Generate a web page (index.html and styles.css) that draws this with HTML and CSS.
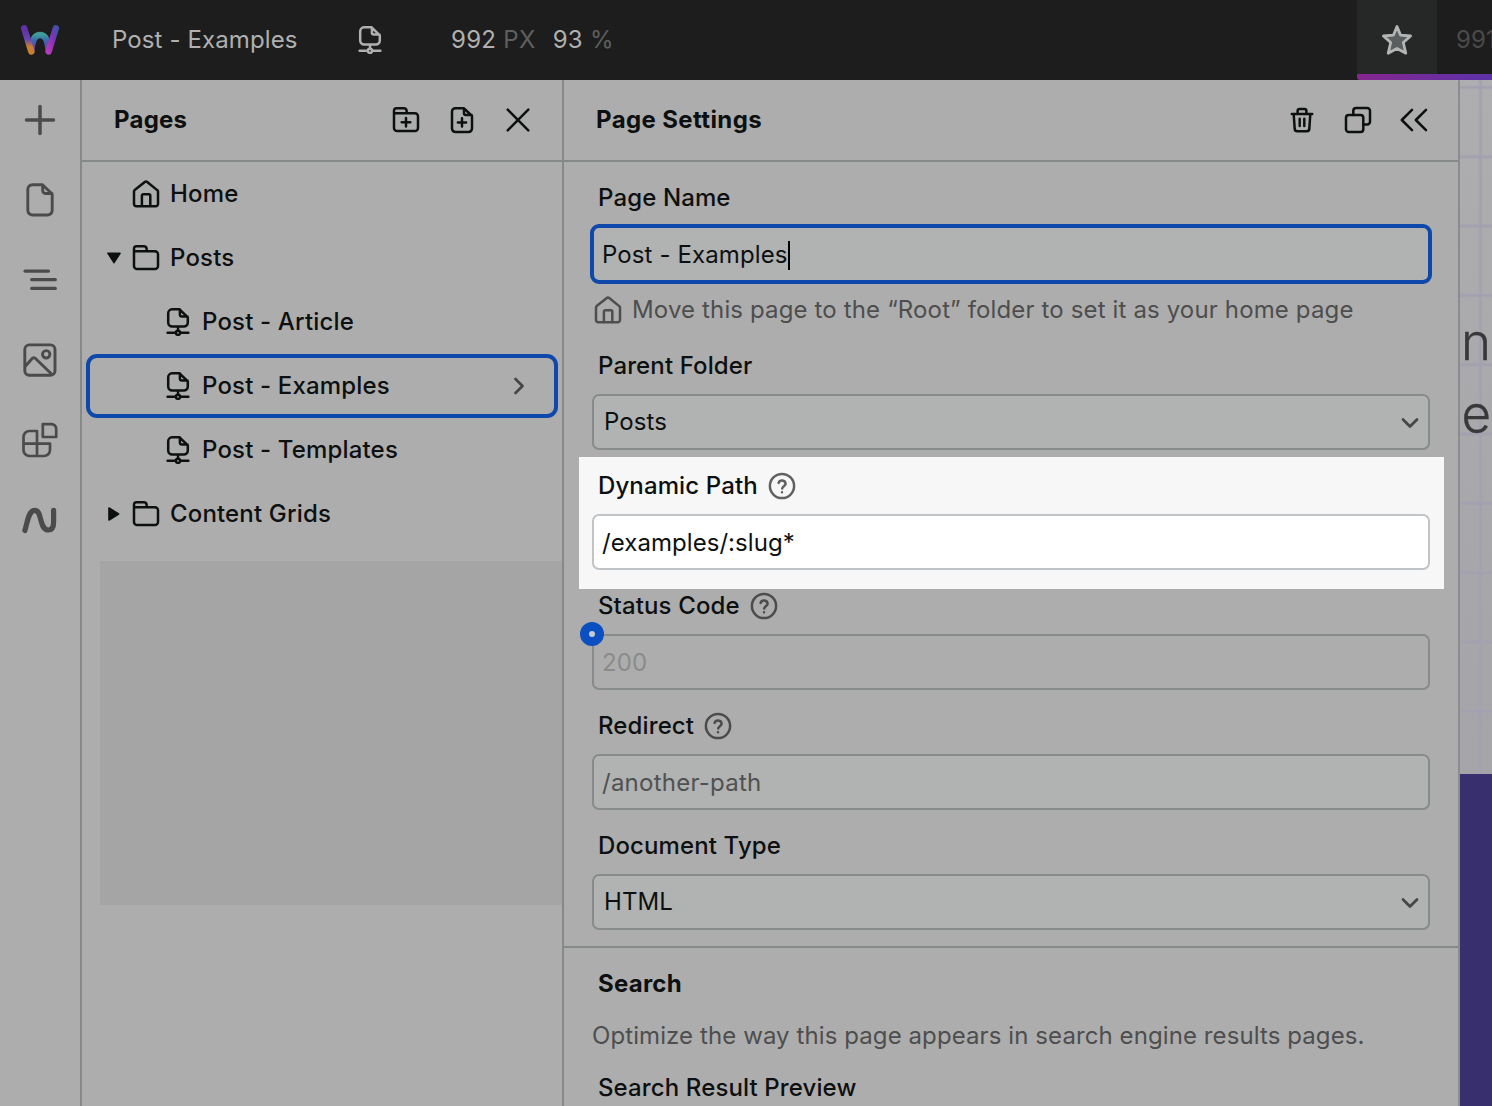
FILE: index.html
```html
<!DOCTYPE html>
<html lang="en">
<head>
<meta charset="utf-8">
<title>Page Settings</title>
<link rel="stylesheet" href="styles.css">
</head>
<body>
<svg class="defs" width="0" height="0">
  <defs>
    <symbol id="dynamic-page" viewBox="0 0 28 28">
      <path d="M15.6 1.3H8A4 4 0 0 0 4.2 5.3V14.6A4 4 0 0 0 8.2 18.6H19.8A4 4 0 0 0 23.8 14.6V9.3ZM15.9 1.6V6.5A2 2 0 0 0 17.9 8.5H23.4M14 19V22.4M3.6 24.8H11.8M16.2 24.8H24.4"/>
      <circle cx="14" cy="24.8" r="2.1"/>
    </symbol>
    <symbol id="home" viewBox="0 0 28 28">
      <path d="M2 11.6A2 2 0 0 1 2.7 10.1L12.8 2A1.9 1.9 0 0 1 15.2 2L25.2 10.1A2 2 0 0 1 26 11.6V24A2.3 2.3 0 0 1 23.7 26.3H4.3A2.3 2.3 0 0 1 2 24ZM9.9 26V15.6A1.4 1.4 0 0 1 11.3 14.2H16.9A1.4 1.4 0 0 1 18.3 15.6V26"/>
    </symbol>
    <symbol id="folder" viewBox="0 0 28 28">
      <path d="M2 7.4V4.8A2.6 2.6 0 0 1 4.6 2.2H11.8A2.8 2.8 0 0 1 14.6 4.8V5.2A2.2 2.2 0 0 0 16.8 7.3H22.9A3.1 3.1 0 0 1 26 10.4V22A3.1 3.1 0 0 1 22.9 25.1H5.1A3.1 3.1 0 0 1 2 22V7.3H16.8"/>
    </symbol>
    <symbol id="help" viewBox="0 0 28 28">
      <circle cx="14" cy="14" r="12.1"/>
      <path d="M10.6 10.9A3.6 3.6 0 0 1 17.6 11.8C17.6 14 14.2 14.4 14.2 16.5M14 20.2V20.3"/>
    </symbol>
    <symbol id="chevron" viewBox="0 0 20 20"><path d="M3 6.5L10 13.5L17 6.5"/></symbol>
  </defs>
</svg>

<header class="topbar">
  <svg class="logo" viewBox="0 0 40 32">
    <defs>
      <linearGradient id="lg-left" x1="0" y1="0" x2="0" y2="1"><stop offset=".1" stop-color="#6232a8"/><stop offset=".5" stop-color="#6a48ac"/><stop offset=".8" stop-color="#c8802f"/></linearGradient>
      <linearGradient id="lg-right" x1="1" y1="0" x2="0" y2="1"><stop offset="0" stop-color="#4250ac"/><stop offset=".45" stop-color="#8630b4"/><stop offset="1" stop-color="#b03cb8"/></linearGradient>
      <linearGradient id="lg-mid" x1="0" y1="0" x2="0" y2="1"><stop offset="0" stop-color="#3f9c98"/><stop offset=".35" stop-color="#3b68b4"/><stop offset=".9" stop-color="#7040a8"/></linearGradient>
    </defs>
    <path d="M11.5 26C12 18 14 11 20 11S28 18 28.5 26" stroke="url(#lg-mid)"/>
    <path d="M4.2 8L7 17Q9 24 11.3 31" transform="translate(0 -3.6)" stroke="url(#lg-left)"/>
    <path d="M35.8 8L33 17Q31 24 28.7 31" transform="translate(0 -3.6)" stroke="url(#lg-right)"/>
  </svg>
  <span class="page-title">Post - Examples</span>
  <svg class="icon page-kind"><use href="#dynamic-page"/></svg>
  <span class="measure">992 <i>PX</i></span>
  <span class="measure">93 <i>%</i></span>
  <div class="breakpoints">
    <div class="star-tab"><svg width="36" height="36" viewBox="0 0 36 36"><path d="M18 4.5L21.6 13.2L31.6 14L24.3 20.5L26.8 31.2L18 26.6L9.2 31.2L11.7 20.5L4.4 14L14.4 13.2Z"/></svg></div>
    <span>991</span>
  </div>
</header>

<div class="workspace">
  <nav class="rail">
    <svg viewBox="0 0 40 40"><path d="M20 6.5V33.5M6.5 20H33.5" stroke-width="3.5"/></svg>
    <svg viewBox="0 0 40 40"><path d="M22.5 4.7H12.5A4.7 4.7 0 0 0 7.8 9.4V30.3A4.7 4.7 0 0 0 12.5 35H27.5A4.7 4.7 0 0 0 32.2 30.3V14ZM22.7 5V10.5A3 3 0 0 0 25.7 13.5H32"/></svg>
    <svg viewBox="0 0 40 40"><path d="M5 11.1H28.5M11.7 19.7H35.3M11.7 28.4H35.3" stroke-width="3.2"/></svg>
    <svg viewBox="0 0 40 40"><rect x="4.8" y="4.9" width="30.2" height="30.4" rx="4.5"/><circle cx="26.2" cy="14.3" r="3.7"/><path d="M5.3 26.3L12.4 18.3Q13.8 17 15.2 18.3L31.8 34.3"/></svg>
    <svg viewBox="0 0 40 40"><path d="M17 36V11H9.5A6 6 0 0 0 3.5 17V30A6 6 0 0 0 9.5 36H24A6 6 0 0 0 30 30V23.7H3.5M22.8 4.1H31.5A4.7 4.7 0 0 1 36.2 8.8V17H22.8Z" stroke-width="2.7"/></svg>
    <svg viewBox="0 0 40 40"><path d="M4.9 30.5C7.5 22 8.5 10.3 14.8 10.3C22.5 10.3 18.8 30 28.5 30C32.4 30 33.6 26.5 33.6 22V10.4" stroke-width="5.2"/></svg>
  </nav>

  <section class="pages">
    <div class="panel-head">
      <h2>Pages</h2>
      <svg class="icon" viewBox="0 0 28 28"><use href="#folder"/><path d="M14 12V20.6M9.7 16.3H18.3"/></svg>
      <svg class="icon" viewBox="0 0 28 28"><path d="M15.8 2.2H7.4A3.4 3.4 0 0 0 4 5.6V22.6A3.4 3.4 0 0 0 7.4 26H20.6A3.4 3.4 0 0 0 24 22.6V10ZM16 2.6V7A2 2 0 0 0 18 9H23.6M14 12.3V20.5M9.9 16.4H18.1"/></svg>
      <svg class="icon" viewBox="0 0 28 28"><path d="M3.7 3.7L24.3 24.3M24.3 3.7L3.7 24.3"/></svg>
    </div>
    <div class="row root"><svg class="icon"><use href="#home"/></svg><span>Home</span></div>
    <div class="row folder-row"><svg class="tri" viewBox="0 0 16 16"><path d="M2 3.2H14L8 12.6Z"/></svg><svg class="icon"><use href="#folder"/></svg><span>Posts</span></div>
    <div class="row child"><svg class="icon"><use href="#dynamic-page"/></svg><span>Post - Article</span></div>
    <div class="row child selected"><svg class="icon"><use href="#dynamic-page"/></svg><span>Post - Examples</span><svg class="chev right"><use href="#chevron"/></svg></div>
    <div class="row child"><svg class="icon"><use href="#dynamic-page"/></svg><span>Post - Templates</span></div>
    <div class="row folder-row"><svg class="tri" viewBox="0 0 16 16"><path d="M3 2V14L12.6 8Z"/></svg><svg class="icon"><use href="#folder"/></svg><span>Content Grids</span></div>
    <div class="placeholder"></div>
  </section>

  <section class="settings">
    <div class="panel-head">
      <h2>Page Settings</h2>
      <svg class="icon" viewBox="0 0 28 28"><path d="M3.8 8H24.2M5.7 8L6.7 23A2.5 2.5 0 0 0 9.2 25.2H18.8A2.5 2.5 0 0 0 21.3 23L22.3 8M9.6 7.6V5A2 2 0 0 1 11.6 3H16.4A2 2 0 0 1 18.4 5V7.6M11.7 12.8V20M16.3 12.8V20"/></svg>
      <svg class="icon" viewBox="0 0 28 28"><rect x="2" y="9" width="17.3" height="17" rx="2.8"/><path d="M9.3 9V4.8A2.8 2.8 0 0 1 12.1 2H23.2A2.8 2.8 0 0 1 26 4.8V15.7A2.8 2.8 0 0 1 23.2 18.5H19.3"/></svg>
      <svg class="icon" viewBox="0 0 28 28"><path d="M12 3.8L1.8 14L12 24.2M26 3.8L15.8 14L26 24.2"/></svg>
    </div>
    <div class="form">
      <div class="field">
        <label>Page Name</label>
        <div class="input focused">Post - Examples<span class="caret"></span></div>
        <p class="hint"><svg class="icon"><use href="#home"/></svg>Move this page to the “Root” folder to set it as your home page</p>
      </div>
      <div class="field">
        <label>Parent Folder</label>
        <div class="input select">Posts<svg class="chev"><use href="#chevron"/></svg></div>
      </div>
      <div class="field highlight">
        <label>Dynamic Path<svg class="icon"><use href="#help"/></svg></label>
        <div class="input">/examples/:slug*</div>
      </div>
      <div class="field">
        <label>Status Code<svg class="icon"><use href="#help"/></svg></label>
        <div class="input disabled">200<span class="marker"></span></div>
      </div>
      <div class="field">
        <label>Redirect<svg class="icon"><use href="#help"/></svg></label>
        <div class="input empty">/another-path</div>
      </div>
      <div class="field">
        <label>Document Type</label>
        <div class="input select">HTML<svg class="chev"><use href="#chevron"/></svg></div>
      </div>
    </div>
    <div class="search">
      <h3>Search</h3>
      <p>Optimize the way this page appears in search engine results pages.</p>
      <label>Search Result Preview</label>
    </div>
  </section>

  <main class="canvas">
    <div class="hero"><span>on</span><span>e</span></div>
    <div class="band"></div>
  </main>
</div>
</body>
</html>
```
FILE: styles.css
```css
* { box-sizing: border-box; }
body {
  margin: 0;
  width: 1492px;
  height: 1106px;
  overflow: hidden;
  display: flex;
  flex-direction: column;
  background: #adadad;
  color: #0d1010;
  font: 400 24px/32px Inter, "Liberation Sans", sans-serif;
  letter-spacing: 0.12px;
}
h2, h3, p { margin: 0; font-size: 24px; }
h2, h3 { font-weight: 700; letter-spacing: 0.24px; }
svg { flex: none; fill: none; stroke: currentColor; stroke-width: 2.5; stroke-linecap: round; stroke-linejoin: round; }
.defs { position: absolute; }
.icon { width: 28px; height: 28px; }

.topbar { flex: none; height: 80px; display: flex; align-items: center; background: #1d1d1d; color: #b0b0b0; padding-left: 20px; overflow: hidden; }
.logo { width: 40px; height: 32px; stroke-width: 6.4; }
.page-title { width: 244px; margin-left: 52px; }
.page-kind { margin-right: 67px; }
.measure { margin-right: 17px; letter-spacing: 0.3px; }
.measure i { font-style: normal; color: #5e5f5f; }
.breakpoints { margin-left: auto; flex: none; width: 135px; height: 80px; display: flex; align-items: center; overflow: hidden; color: #4a4a4a;
  background: linear-gradient(90deg, #87268f, #5c32a8) 0 100% / 100% 6px no-repeat; border-bottom-left-radius: 3px; }
.star-tab { flex: none; width: 80px; height: 74px; padding-top: 6px; margin-bottom: 6px; margin-right: 19px; display: flex; align-items: center; justify-content: center; background: #262727; color: #b3b4b4; }
.star-tab svg { fill: #5b5e5e; stroke-width: 2.8; }

.workspace { flex: 1; min-height: 0; display: flex; }
.rail { flex: none; width: 82px; border-right: 2px solid #86898a; display: flex; flex-direction: column; align-items: center; gap: 40px; padding-top: 20px; color: #4b4b4b; }
.rail svg { width: 40px; height: 40px; stroke-width: 2.9; }

.panel-head { height: 82px; display: flex; align-items: center; gap: 28px; padding: 0 30px 0 32px; border-bottom: 2px solid #868989; }
.panel-head h2 { margin-right: auto; }
.settings .panel-head h2 { letter-spacing: 0.38px; }
.pages { flex: none; width: 482px; border-right: 2px solid #868989; }
.row { height: 64px; display: flex; align-items: center; font-weight: 500; letter-spacing: 0.16px; }
.row span { margin-left: 10px; }
.row.root { padding-left: 50px; }
.row.folder-row { padding-left: 24px; }
.tri { width: 16px; height: 16px; margin-right: 10px; fill: currentColor; stroke-width: 1.6; }
.row.child { padding-left: 82px; }
.row.selected { margin: 0 4px; padding: 0 25px 0 74px; border: 4px solid #0e48ab; border-radius: 11px; }
.chev { width: 20px; height: 20px; margin-left: auto; color: #454646; stroke-width: 2.7; }
.chev.right { transform: rotate(-90deg); }
.placeholder { height: 344px; margin: 15px 0 0 18px; background: #a5a5a5; }

.settings { flex: none; width: 896px; border-right: 2px solid #8b8c90; }
.form { padding: 8px 28px 16px; display: flex; flex-direction: column; gap: 8px; border-bottom: 2px solid #868989; }
.field:first-child { margin-bottom: -8px; }
label { height: 56px; padding-left: 6px; display: flex; align-items: center; gap: 10px; font-weight: 500; }
label .icon { color: #4c4c4c; }
.input { height: 56px; display: flex; align-items: center; border: 2px solid #888b8b; border-radius: 7px; background: #b1b2b2; padding: 2px 8px 0; }
.focused { border: 0; padding: 2px 10px 0; outline: 4px solid #0e48ab; outline-offset: -2px; }
.caret { width: 2px; height: 29px; background: #000; }
.select { padding: 0 8px 0 10px; }
.select .chev { margin-top: 1px; }
.hint { height: 56px; padding-left: 2px; display: flex; align-items: center; gap: 10px; color: #4d4e4e; letter-spacing: 0.14px; }
.highlight { margin: -1px -14px -19px -13px; padding: 1px 14px 19px 13px; background: #f7f7f7; }
.highlight .input { background: #fff; border-color: #c0c4c6; letter-spacing: 0.06px; }
.highlight .icon { color: #616161; }
.disabled { position: relative; background: #adadad; color: #8a8b8b; }
.marker { position: absolute; left: -14px; top: -14px; width: 24px; height: 24px; border: 9px solid #0b4fc0; border-radius: 50%; background: #c4cad6; }
.empty { color: #505151; letter-spacing: 0.24px; }
.search { padding: 8px 28px 0; white-space: nowrap; }
.search h3 { padding-left: 6px; line-height: 56px; }
.search p { line-height: 48px; color: #4d4e4e; letter-spacing: 0.09px; }

.canvas { flex: 1; min-width: 0; overflow: hidden; display: flex; flex-direction: column; color: #38383b; }
.hero { flex: none; height: 694px; padding: 226px 1px 0 0; display: flex; flex-direction: column; align-items: flex-end;
  font-size: 51px; font-weight: 300; -webkit-text-stroke: 0.4px; line-height: 72px; letter-spacing: 0;
  background:
    linear-gradient(90deg, transparent 18px, #a3a1af 20px, #a3a1af 21px, transparent 23px),
    repeating-linear-gradient(180deg, transparent 0 5px, #a3a1af 7px 8px, transparent 10px 69.3px),
    linear-gradient(#aeaeb0, #a4a4a9); }
.band { flex: 1; background: #382f6f; }
```
